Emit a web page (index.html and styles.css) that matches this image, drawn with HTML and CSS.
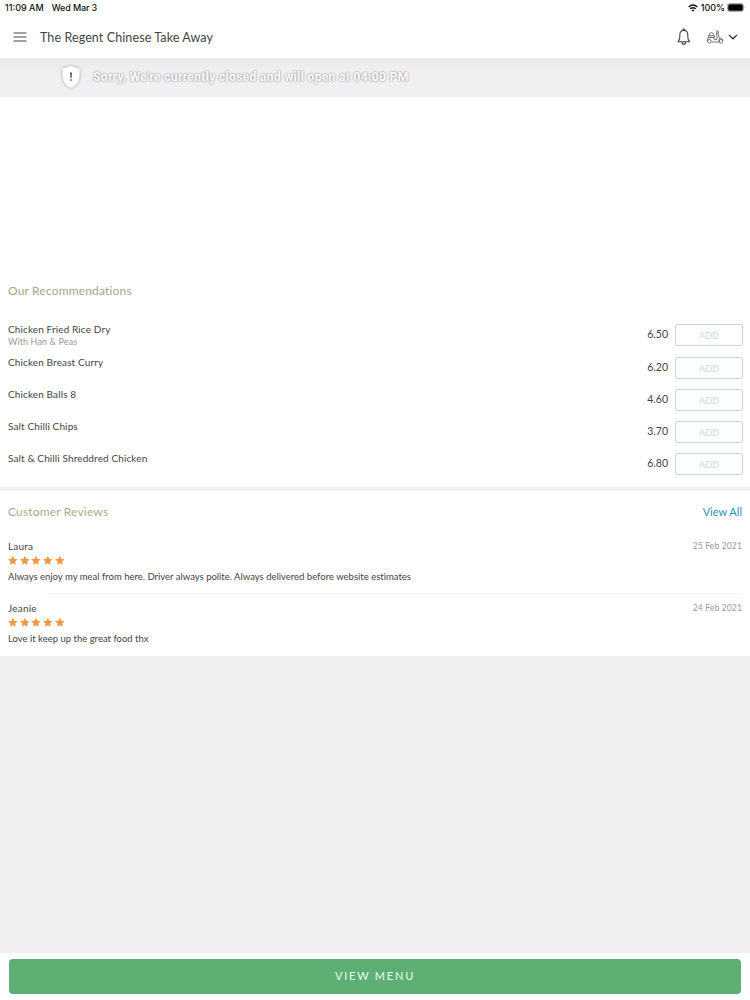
FILE: index.html
```html
<!DOCTYPE html>
<html lang="en">

<head>
    <meta charset="UTF-8">
    <meta name="viewport" content="width=device-width, initial-scale=1.0">
    <title>The Regent Chinese Take Away</title>
    <link rel="stylesheet" href="styles.css">
</head>

<body>
    <!-- Star shape used by the reviews -->
    <svg class="sprite" width="0" height="0">
        <symbol id="star" viewBox="0 0 10 10">
            <path d="M5 .2 6.5 3.2 9.9 3.7 7.4 6 8 9.5 5 7.9 2 9.5 2.6 6 .1 3.7 3.5 3.2Z" />
        </symbol>
    </svg>

    <div class="status-bar">
        <span class="time">11:09 AM</span>
        <span class="date">Wed Mar 3</span>
        <svg class="wifi" width="10" height="8" viewBox="0 0 10 8">
            <path d="M.6 3Q5-1 9.4 3M2.3 4.8Q5 2.5 7.7 4.8" fill="none" stroke="#111" stroke-width="1.4" />
            <path d="M3.5 6.1Q5 5 6.5 6.1L5 7.8Z" fill="#111" />
        </svg>
        <span class="percent">100%</span>
        <svg class="battery" width="19" height="9" viewBox="0 0 19 9">
            <rect x=".5" y=".5" width="16" height="8" rx="2.2" fill="none" stroke="#999" stroke-width=".8" />
            <rect x="1.2" y="1.2" width="14.6" height="6.6" rx="1.5" fill="#000" />
            <path d="M17.6 3.2q1 1.3 0 2.6z" fill="#888" />
        </svg>
    </div>

    <header class="header">
        <svg class="menu" width="14" height="10" viewBox="0 0 14 10">
            <path d="M.5 1H13.5M.5 5H13.5M.5 9H13.5" fill="none" stroke="#444" stroke-width="1.2" />
        </svg>
        <h1>The Regent Chinese Take Away</h1>
        <svg class="bell" width="14" height="18" viewBox="0 0 14 18">
            <path d="M5.8 2.5V1.8Q5.8 1 6.8 1T7.8 1.8V2.5M1 13.8Q2.8 12 2.8 9V6.8Q2.8 2.5 6.8 2.5T10.8 6.8V9Q10.8 12 12.6 13.8ZM5 14Q5 16.3 6.8 16.3T8.6 14" fill="none" stroke="#444" stroke-width="1.1" stroke-linejoin="round" />
        </svg>
        <svg class="scooter" width="18" height="14" viewBox="0 0 18 14">
            <g fill="none" stroke="#666" stroke-width=".9" stroke-linejoin="round">
                <path d="M3 5.6Q3 2.6 5.3 2.6T7.8 5.6M2.4 5.7H8.4V7.4H2.4ZM1 11Q1 7.5 3.6 7.5H7.4Q8.2 7.5 8.2 9V9.6H10Q11.3 9.6 11.1 8L10.4 2.8M9.8 1H12.2V3H10.1M12 3 13.4 8.7M5.4 12H13V9.8Q13.3 8.2 14.5 8.2 16.4 8.4 17 10.6" />
                <circle cx="3.4" cy="11.3" r="1.8" />
                <circle cx="14.9" cy="11.3" r="1.8" />
            </g>
        </svg>
        <svg class="chevron" width="10" height="6" viewBox="0 0 10 6">
            <path d="M1 1 5 4.8 9 1" fill="none" stroke="#333" stroke-width="1.2" />
        </svg>
    </header>

    <div class="closed">
        <svg class="shield" width="24" height="28" viewBox="0 0 24 28">
            <path d="M12 2.5Q16 5 20.6 5.2V13.5Q20.3 21 12 25.2 3.7 21 3.4 13.5V5.2Q8 5 12 2.5Z" fill="#fff" />
            <path d="M11 9.5H13L12.6 15H11.4ZM11.2 16.2H12.8V17.8H11.2Z" fill="#555" />
        </svg>
        <span>Sorry, We're currently closed and will open at 04:00 PM</span>
    </div>

    <section class="recommendations">
        <h2>Our Recommendations</h2>
        <ul class="dishes">
            <li class="dish with-note">
                <div class="name">Chicken Fried Rice Dry<small>With Han &amp; Peas</small></div>
                <span class="price">6.50</span>
                <button class="add">ADD</button>
            </li>
            <li class="dish">
                <div class="name">Chicken Breast Curry</div>
                <span class="price">6.20</span>
                <button class="add">ADD</button>
            </li>
            <li class="dish">
                <div class="name">Chicken Balls 8</div>
                <span class="price">4.60</span>
                <button class="add">ADD</button>
            </li>
            <li class="dish">
                <div class="name">Salt Chilli Chips</div>
                <span class="price">3.70</span>
                <button class="add">ADD</button>
            </li>
            <li class="dish">
                <div class="name">Salt &amp; Chilli Shreddred Chicken</div>
                <span class="price">6.80</span>
                <button class="add">ADD</button>
            </li>
        </ul>
    </section>

    <section class="reviews">
        <div class="reviews-top">
            <h2>Customer Reviews</h2>
            <a class="view-all">View All</a>
        </div>
        <article class="review">
            <div class="review-top">
                <span class="author">Laura</span>
                <span class="day">25 Feb 2021</span>
            </div>
            <div class="stars">
                <svg><use href="#star" /></svg>
                <svg><use href="#star" /></svg>
                <svg><use href="#star" /></svg>
                <svg><use href="#star" /></svg>
                <svg><use href="#star" /></svg>
            </div>
            <p>Always enjoy my meal from here. Driver always polite. Always delivered before website estimates</p>
        </article>
        <hr>
        <article class="review">
            <div class="review-top">
                <span class="author">Jeanie</span>
                <span class="day">24 Feb 2021</span>
            </div>
            <div class="stars">
                <svg><use href="#star" /></svg>
                <svg><use href="#star" /></svg>
                <svg><use href="#star" /></svg>
                <svg><use href="#star" /></svg>
                <svg><use href="#star" /></svg>
            </div>
            <p>Love it keep up the great food thx</p>
        </article>
    </section>

    <footer class="footer">
        <button class="view-menu">VIEW MENU</button>
    </footer>
</body>

</html>
```
FILE: styles.css
```css
* {
    box-sizing: border-box;
}

body {
    display: flex;
    flex-direction: column;
    height: 1000px;
    margin: 0;
    background-color: #f1eff2;
    color: #444;
    font-family: Lato, sans-serif;
    font-variant-ligatures: none;
    overflow: hidden;
}

h1,
h2,
p,
ul {
    margin: 0;
    padding: 0;
    font-weight: normal;
}

svg {
    display: block;
    flex: none;
}

button {
    padding: 0;
    font-family: inherit;
}

.sprite {
    display: none;
}

.status-bar {
    display: flex;
    align-items: center;
    height: 15px;
    padding: 0 4px 0 5px;
    background-color: #fff;
    color: #111;
    font: 500 9px/15px Inter, sans-serif;
}

.date {
    margin-left: 8px;
    letter-spacing: -0.15px;
}

.wifi {
    margin-left: auto;
}

.percent {
    margin: 0 2px 0 3px;
}

.header {
    display: flex;
    align-items: center;
    height: 43px;
    padding: 0 12px 0 13px;
    background-color: #fff;
}

.header h1 {
    margin-left: 13px;
    padding-top: 2px;
    font-size: 12.5px;
    letter-spacing: 0.1px;
    line-height: 16px;
}

.bell {
    margin-left: auto;
}

.scooter {
    margin-left: 15px;
}

.chevron {
    margin-left: 4px;
}

.closed {
    display: flex;
    align-items: center;
    gap: 10px;
    height: 39px;
    padding: 0 0 2px 59px;
    background: linear-gradient(#e9e8ea, #f1eff2 14px);
    color: #fff;
    font: bold 12px/16px Roboto, sans-serif;
    letter-spacing: 0.36px;
    text-shadow: 0 0 2px #999, 0 0 2px #aaa;
}

.shield {
    filter: drop-shadow(0 0 1.5px #999);
}

.recommendations {
    height: 390px;
    padding: 186px 8px 0;
    background-color: #fff;
}

h2 {
    color: #a9a487;
    font-size: 12px;
    letter-spacing: 0.17px;
    line-height: 16px;
}

.dishes {
    margin-top: 25px;
    list-style: none;
}

.dish {
    display: flex;
    height: 32px;
}

.with-note {
    height: 33px;
}

.name {
    flex: 1;
    font-size: 10px;
    letter-spacing: 0.12px;
    line-height: 10px;
}

.name small {
    display: block;
    color: #999;
    font-size: 9px;
    line-height: 16px;
}

.price {
    font-size: 10.5px;
    line-height: 20px;
}

.add {
    width: 68px;
    height: 22px;
    margin: 0 -1px 0 7px;
    border: 1px solid #c5d9d7;
    border-radius: 2px;
    background-color: #fff;
    color: #cbdcd1;
    font-size: 9px;
}

.reviews {
    height: 169px;
    border-top: 4px solid #f0f0f1;
    padding: 13px 8px 0;
    background-color: #fff;
}

.reviews-top {
    display: flex;
    justify-content: space-between;
}

.reviews h2 {
    color: #a8ad88;
}

.view-all {
    color: #2e8fae;
    font-size: 11px;
    line-height: 16px;
}

.review {
    height: 48px;
    font-size: 9.5px;
    line-height: 14px;
}

.reviews-top + .review {
    margin-top: 19px;
}

.review-top {
    display: flex;
    justify-content: space-between;
}

.author {
    font-size: 10px;
    letter-spacing: 0.2px;
}

.day {
    color: #999;
    font-size: 8.5px;
    letter-spacing: 0.15px;
    line-height: 14px;
}

.stars {
    display: flex;
    gap: 2px;
    height: 10px;
    margin: 2px 0 5px;
    fill: #ee9a45;
}

.stars svg {
    width: 9.7px;
    height: 11px;
}

hr {
    height: 1px;
    margin: 6px 0 7px 40px;
    border: 0;
    background-color: #f5f3f4;
}

.footer {
    height: 47px;
    margin-top: auto;
    padding: 6px 9px 0;
    background-color: #fff;
}

.view-menu {
    width: 100%;
    height: 35px;
    padding-bottom: 2px;
    border: 0;
    border-radius: 4px;
    background-color: #5daf74;
    color: #eefbf0;
    font-size: 11px;
    letter-spacing: 1.8px;
}
```
